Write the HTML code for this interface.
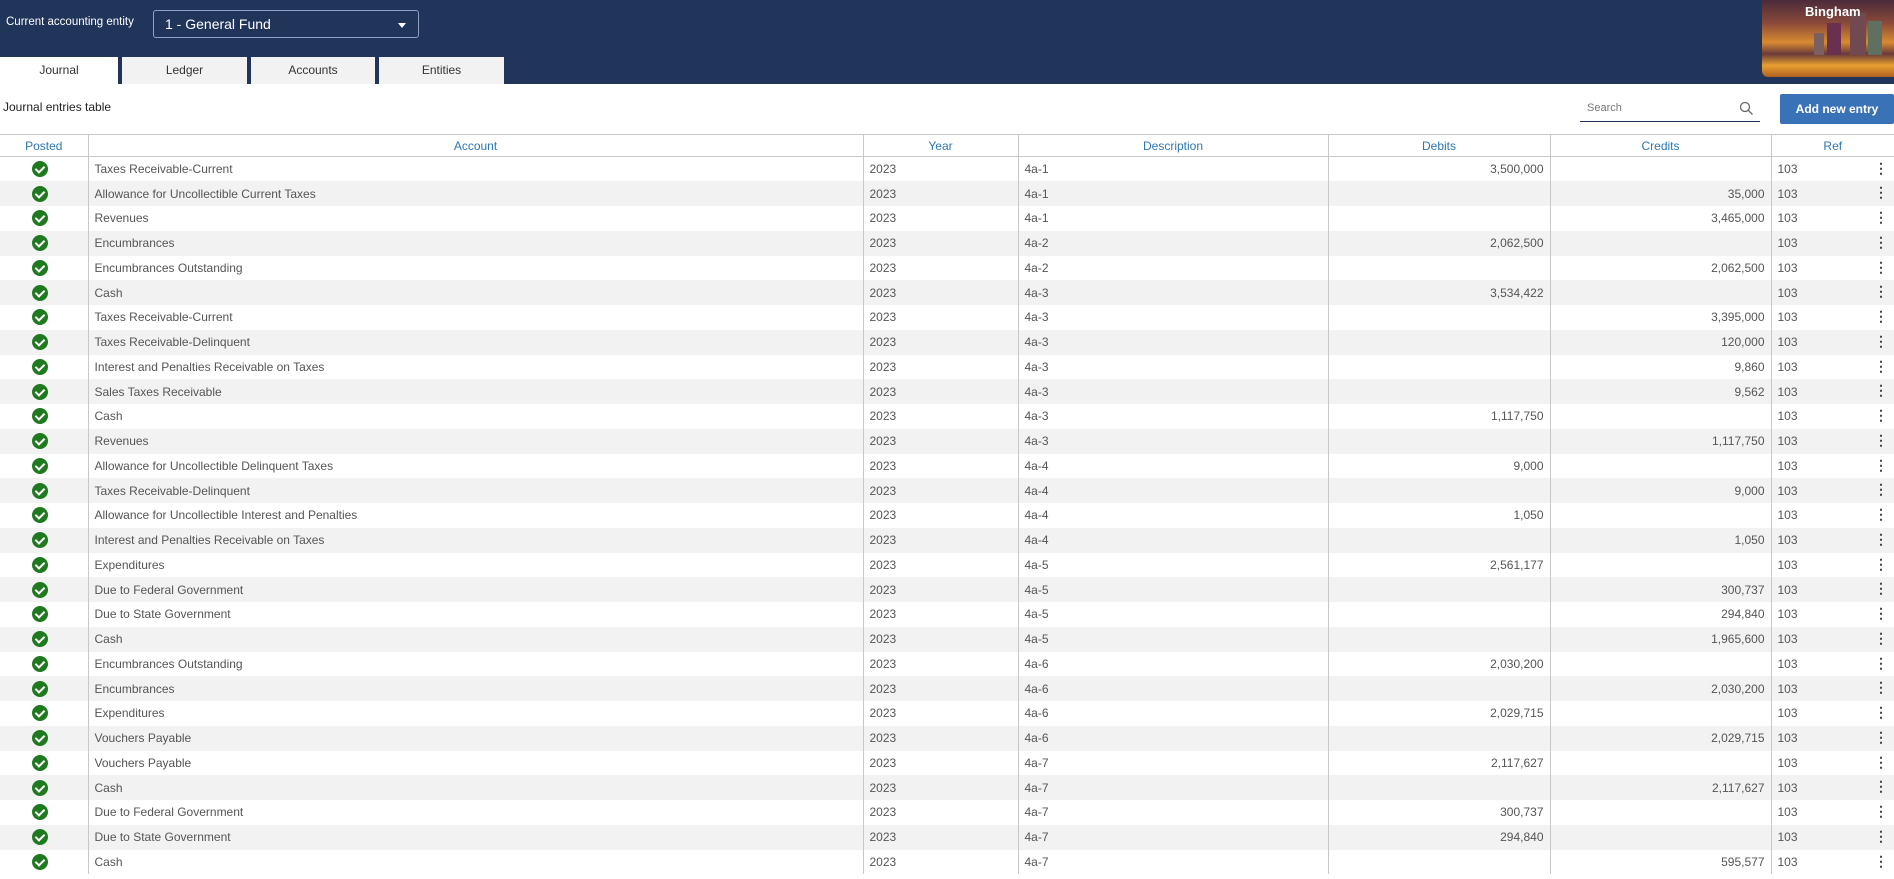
<!DOCTYPE html>
<html><head><meta charset="utf-8"><style>
*{box-sizing:border-box;margin:0;padding:0}
body{width:1894px;height:879px;overflow:hidden;background:#fff;font-family:"Liberation Sans",Arial,sans-serif;position:relative}
.top{position:absolute;left:0;top:0;width:1894px;height:84px;background:#21345a}
.lbl{position:absolute;left:6px;top:16px;color:#fff;font-size:11.5px}
.sel{position:absolute;left:153px;top:10px;width:266px;height:28px;border:1px solid #8fa3c0;border-radius:3px;color:#fff;font-size:14px;padding:5px 0 0 11px}
.sel:after{content:"";position:absolute;right:12px;top:12px;border-left:4px solid transparent;border-right:4px solid transparent;border-top:5px solid #fff}
.tab{position:absolute;top:57px;height:27px;background:#f2f2f2;color:#333;font-size:12px;text-align:center;line-height:27px}
.city{position:absolute;left:1762px;top:0;width:132px;height:77px;border-bottom-left-radius:6px;overflow:hidden;
background:linear-gradient(180deg,#4a2a3a 0%,#8a4a3a 30%,#d98a30 55%,#6a3a3a 70%,#e8a030 85%,#b06020 100%)}
.city b{position:absolute;left:43px;top:4px;color:#fff;font-size:13px;font-weight:bold}
.bld{position:absolute;bottom:22px;background:#5a3048}
.title{position:absolute;left:3px;top:100px;font-size:12px;color:#222}
.search{position:absolute;left:1580px;top:98px;width:180px;height:24px;border-bottom:1px solid #21345a;font-size:11px;color:#777;padding:4px 0 0 7px}
.btn{position:absolute;left:1780px;top:94px;width:114px;height:30px;background:#3a72b8;border-radius:2px;color:#fff;font-weight:bold;font-size:12px;text-align:center;line-height:30px}
table{position:absolute;left:0;top:134px;border-collapse:collapse;table-layout:fixed;width:1894px;font-size:12px;color:#555}
th{height:22px;font-weight:normal;color:#2d78b0;border:1px solid #c8c8c8;font-size:12px}
td{height:24.75px;border-left:1px solid #c8c8c8;border-right:1px solid #c8c8c8;padding:0 6px;white-space:nowrap}
tr:nth-child(odd) td{background:#f2f2f2}
td:first-child,th:first-child{border-left:none}
td:last-child,th:last-child{border-right:none}
.c{text-align:center;padding:0}
.r{text-align:right}
.ck{display:inline-block;width:16px;height:16px;border-radius:50%;background:#1f7a1f;vertical-align:middle;position:relative;margin-left:-8px}
.ck:after{content:"";position:absolute;left:5px;top:3px;width:4px;height:7px;border:solid #fff;border-width:0 2px 2px 0;transform:rotate(45deg)}
.ref{position:relative}
.ref:after{content:"⋮";position:absolute;right:6px;top:3px;font-weight:bold;color:#444;font-size:14px}
</style></head><body>
<div class="top"></div>
<div class="lbl">Current accounting entity</div>
<div class="sel">1 - General Fund</div>
<div class="tab" style="left:0;width:118px;background:#fff">Journal</div>
<div class="tab" style="left:122px;width:125px">Ledger</div>
<div class="tab" style="left:251px;width:124px">Accounts</div>
<div class="tab" style="left:379px;width:125px">Entities</div>
<div class="city"><div class="bld" style="left:65px;width:14px;height:32px;background:#6a3050"></div><div class="bld" style="left:88px;width:16px;height:42px;background:#704a50"></div><div class="bld" style="left:106px;width:14px;height:34px;background:#607060"></div><div class="bld" style="left:52px;width:10px;height:22px;background:#7a6060"></div><b>Bingham</b></div>
<div class="title">Journal entries table</div>
<div class="search">Search<svg style="position:absolute;right:6px;top:3px" width="15" height="15" viewBox="0 0 15 15"><circle cx="6" cy="6" r="4.5" fill="none" stroke="#666" stroke-width="1.3"/><path d="M9.3 9.3L13.5 13.5" stroke="#666" stroke-width="1.3"/></svg></div>
<div class="btn">Add new entry</div>
<table>
<colgroup><col style="width:88px"><col style="width:775px"><col style="width:155px"><col style="width:310px"><col style="width:222px"><col style="width:221px"><col style="width:123px"></colgroup>
<tr><th>Posted</th><th>Account</th><th>Year</th><th>Description</th><th>Debits</th><th>Credits</th><th>Ref</th></tr>
<tr><td class="c"><span class="ck"></span></td><td>Taxes Receivable-Current</td><td>2023</td><td>4a-1</td><td class="r">3,500,000</td><td class="r"></td><td class="ref">103</td></tr>
<tr><td class="c"><span class="ck"></span></td><td>Allowance for Uncollectible Current Taxes</td><td>2023</td><td>4a-1</td><td class="r"></td><td class="r">35,000</td><td class="ref">103</td></tr>
<tr><td class="c"><span class="ck"></span></td><td>Revenues</td><td>2023</td><td>4a-1</td><td class="r"></td><td class="r">3,465,000</td><td class="ref">103</td></tr>
<tr><td class="c"><span class="ck"></span></td><td>Encumbrances</td><td>2023</td><td>4a-2</td><td class="r">2,062,500</td><td class="r"></td><td class="ref">103</td></tr>
<tr><td class="c"><span class="ck"></span></td><td>Encumbrances Outstanding</td><td>2023</td><td>4a-2</td><td class="r"></td><td class="r">2,062,500</td><td class="ref">103</td></tr>
<tr><td class="c"><span class="ck"></span></td><td>Cash</td><td>2023</td><td>4a-3</td><td class="r">3,534,422</td><td class="r"></td><td class="ref">103</td></tr>
<tr><td class="c"><span class="ck"></span></td><td>Taxes Receivable-Current</td><td>2023</td><td>4a-3</td><td class="r"></td><td class="r">3,395,000</td><td class="ref">103</td></tr>
<tr><td class="c"><span class="ck"></span></td><td>Taxes Receivable-Delinquent</td><td>2023</td><td>4a-3</td><td class="r"></td><td class="r">120,000</td><td class="ref">103</td></tr>
<tr><td class="c"><span class="ck"></span></td><td>Interest and Penalties Receivable on Taxes</td><td>2023</td><td>4a-3</td><td class="r"></td><td class="r">9,860</td><td class="ref">103</td></tr>
<tr><td class="c"><span class="ck"></span></td><td>Sales Taxes Receivable</td><td>2023</td><td>4a-3</td><td class="r"></td><td class="r">9,562</td><td class="ref">103</td></tr>
<tr><td class="c"><span class="ck"></span></td><td>Cash</td><td>2023</td><td>4a-3</td><td class="r">1,117,750</td><td class="r"></td><td class="ref">103</td></tr>
<tr><td class="c"><span class="ck"></span></td><td>Revenues</td><td>2023</td><td>4a-3</td><td class="r"></td><td class="r">1,117,750</td><td class="ref">103</td></tr>
<tr><td class="c"><span class="ck"></span></td><td>Allowance for Uncollectible Delinquent Taxes</td><td>2023</td><td>4a-4</td><td class="r">9,000</td><td class="r"></td><td class="ref">103</td></tr>
<tr><td class="c"><span class="ck"></span></td><td>Taxes Receivable-Delinquent</td><td>2023</td><td>4a-4</td><td class="r"></td><td class="r">9,000</td><td class="ref">103</td></tr>
<tr><td class="c"><span class="ck"></span></td><td>Allowance for Uncollectible Interest and Penalties</td><td>2023</td><td>4a-4</td><td class="r">1,050</td><td class="r"></td><td class="ref">103</td></tr>
<tr><td class="c"><span class="ck"></span></td><td>Interest and Penalties Receivable on Taxes</td><td>2023</td><td>4a-4</td><td class="r"></td><td class="r">1,050</td><td class="ref">103</td></tr>
<tr><td class="c"><span class="ck"></span></td><td>Expenditures</td><td>2023</td><td>4a-5</td><td class="r">2,561,177</td><td class="r"></td><td class="ref">103</td></tr>
<tr><td class="c"><span class="ck"></span></td><td>Due to Federal Government</td><td>2023</td><td>4a-5</td><td class="r"></td><td class="r">300,737</td><td class="ref">103</td></tr>
<tr><td class="c"><span class="ck"></span></td><td>Due to State Government</td><td>2023</td><td>4a-5</td><td class="r"></td><td class="r">294,840</td><td class="ref">103</td></tr>
<tr><td class="c"><span class="ck"></span></td><td>Cash</td><td>2023</td><td>4a-5</td><td class="r"></td><td class="r">1,965,600</td><td class="ref">103</td></tr>
<tr><td class="c"><span class="ck"></span></td><td>Encumbrances Outstanding</td><td>2023</td><td>4a-6</td><td class="r">2,030,200</td><td class="r"></td><td class="ref">103</td></tr>
<tr><td class="c"><span class="ck"></span></td><td>Encumbrances</td><td>2023</td><td>4a-6</td><td class="r"></td><td class="r">2,030,200</td><td class="ref">103</td></tr>
<tr><td class="c"><span class="ck"></span></td><td>Expenditures</td><td>2023</td><td>4a-6</td><td class="r">2,029,715</td><td class="r"></td><td class="ref">103</td></tr>
<tr><td class="c"><span class="ck"></span></td><td>Vouchers Payable</td><td>2023</td><td>4a-6</td><td class="r"></td><td class="r">2,029,715</td><td class="ref">103</td></tr>
<tr><td class="c"><span class="ck"></span></td><td>Vouchers Payable</td><td>2023</td><td>4a-7</td><td class="r">2,117,627</td><td class="r"></td><td class="ref">103</td></tr>
<tr><td class="c"><span class="ck"></span></td><td>Cash</td><td>2023</td><td>4a-7</td><td class="r"></td><td class="r">2,117,627</td><td class="ref">103</td></tr>
<tr><td class="c"><span class="ck"></span></td><td>Due to Federal Government</td><td>2023</td><td>4a-7</td><td class="r">300,737</td><td class="r"></td><td class="ref">103</td></tr>
<tr><td class="c"><span class="ck"></span></td><td>Due to State Government</td><td>2023</td><td>4a-7</td><td class="r">294,840</td><td class="r"></td><td class="ref">103</td></tr>
<tr><td class="c"><span class="ck"></span></td><td>Cash</td><td>2023</td><td>4a-7</td><td class="r"></td><td class="r">595,577</td><td class="ref">103</td></tr>
</table>
</body></html>
